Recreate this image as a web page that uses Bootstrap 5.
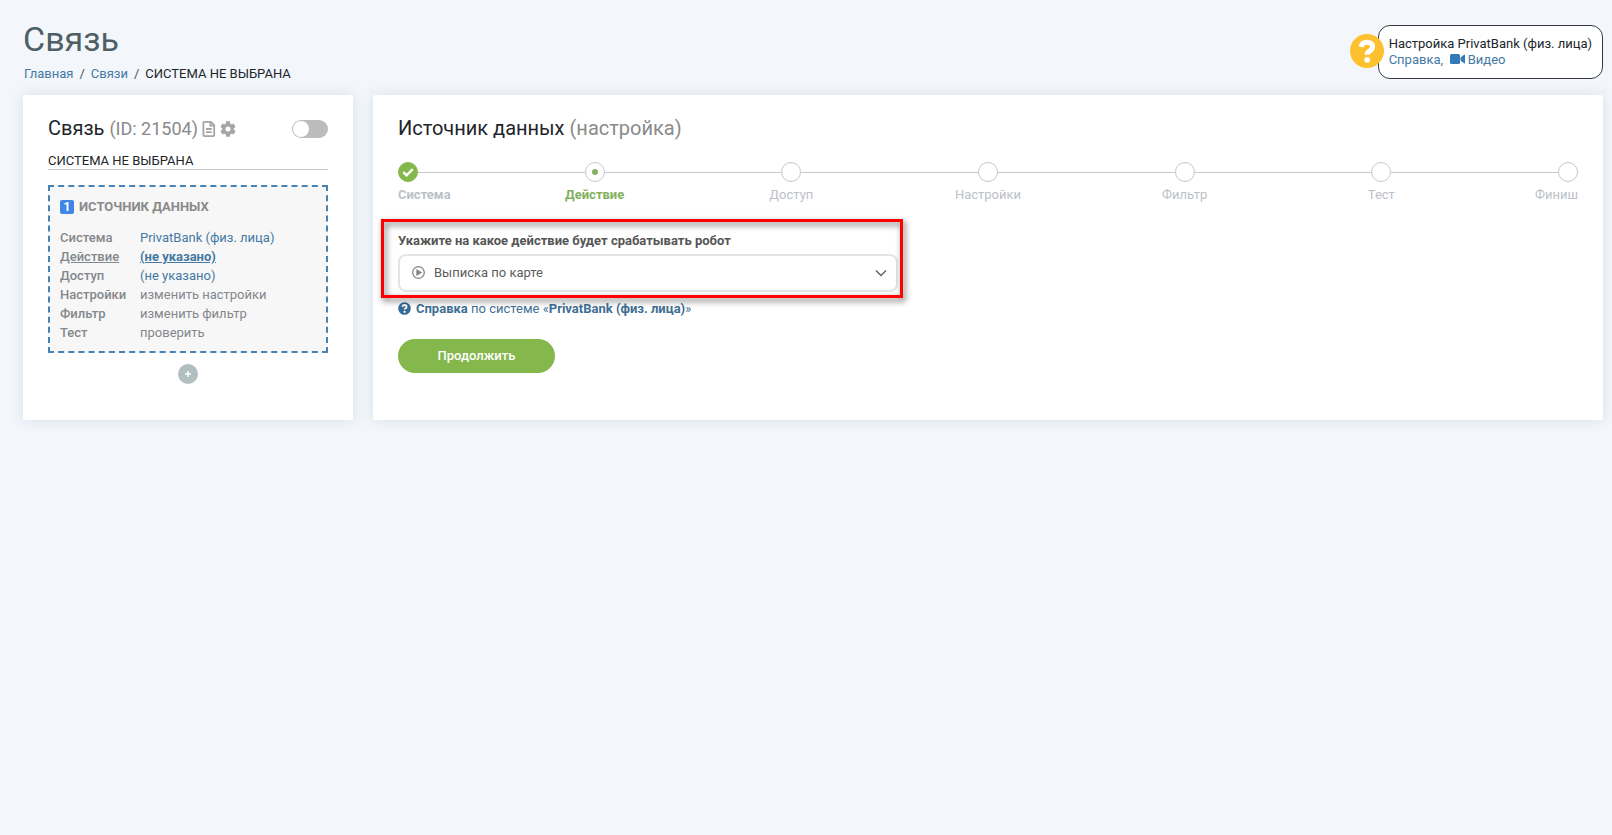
<!DOCTYPE html>
<html lang="ru">
<head>
<meta charset="utf-8">
<meta name="viewport" content="width=device-width, initial-scale=1">
<title>Связь</title>
<link rel="stylesheet" href="https://cdn.jsdelivr.net/npm/bootstrap@5.3.0/dist/css/bootstrap.min.css">
<style>
  body { background: #f3f7fc; font-family: Roboto, "Noto Sans", sans-serif; font-size: 13px; line-height: 19px; color: #212529; }
  a { color: #4479a3; text-decoration: none; }
  a:hover { text-decoration: underline; }
  .page { padding: 19px 9px 20px 23px; }
  .page-title { font-size: 34px; line-height: 40px; font-weight: 400; color: #4f5f66; margin: 0 0 5px; }
  .breadcrumb { --bs-breadcrumb-item-padding-x: 6px; --bs-breadcrumb-divider-color: #495057; --bs-breadcrumb-item-active-color: #212529; margin: 0 0 12px; padding-left: 1px; }

  .help-box { position: relative; margin-top: 6px; padding: 10px; border: 1px solid #343a40; border-radius: 12px; background: #fff; line-height: 16px; }
  .help-mark { position: absolute; left: -29px; top: 8px; width: 34px; height: 34px; }
  .help-links { color: #4479a3; }

  .columns { gap: 20px; }
  .panel { background: #fff; border-radius: 2px; box-shadow: 0 0 14px rgba(60, 75, 95, .14); padding: 20px 25px 36px; }
  .panel-side { flex: 0 0 330px; }
  .panel-title { font-size: 20px; line-height: 26px; font-weight: 400; margin: 0; }
  .panel-side .panel-title { line-height: 27px; }
  .dim { color: #8a8a8a; }
  .link-id { font-size: 18px; }
  .tool { color: #a5a5a5; line-height: 0; }
  .switch { appearance: none; width: 36px; height: 18px; margin: 0; border-radius: 9px; background: #bcbcbc; position: relative; cursor: pointer; }
  .switch::before { content: ""; position: absolute; left: 1px; top: 1px; width: 16px; height: 16px; border-radius: 50%; background: #fff; }
  .switch:checked { background: #84b84c; }
  .switch:checked::before { left: 19px; }
  .link-name { line-height: 17px; margin: 10px 0 15px; border-bottom: 1px solid #c8c8c8; }

  .source { border: 2px dashed #4682b4; background: #f7f7f7; padding: 10px 10px 9px; }
  .source-title { gap: 5px; font-size: 13px; line-height: 19px; font-weight: 700; color: #8a8a8a; margin: 0 0 12px; }
  .num { width: 14px; height: 14px; border-radius: 2px; background: #4285e8; color: #fff; font-size: 12px; line-height: 14px; text-align: center; }
  .source th { width: 80px; padding: 0; font-weight: 500; color: #84878c; }
  .source td { padding: 0; }
  .source td a { color: #4479a3; }
  .source td a.idle { color: #84878c; }
  .add { width: 20px; height: 20px; margin-top: 11px; padding: 0; border: 0; border-radius: 50%; background: #b2bfc1; }

  .steps { display: grid; grid-template-columns: 1fr repeat(5, 2fr) 1fr; margin: 21px 0 27px; padding: 0; list-style: none; color: #bcc1c7; }
  .steps li { display: flex; flex-direction: column; align-items: center; min-width: 0; }
  .steps li:first-child { align-items: flex-start; }
  .steps li:last-child { align-items: flex-end; }
  .rail { display: flex; align-items: center; width: 100%; margin-bottom: 3px; }
  .rail::before, .rail::after { content: ""; flex: 1; height: 1px; background: #c6c8ca; }
  .steps li:first-child .rail::before, .steps li:last-child .rail::after { display: none; }
  .dot { width: 20px; height: 20px; border: 1px solid #c6c8ca; border-radius: 50%; display: flex; align-items: center; justify-content: center; }
  .done .dot { background: #84b84c; border-color: #84b84c; }
  .done { font-weight: 700; }
  .current { font-weight: 700; color: #84b062; }
  .current .dot::before { content: ""; width: 6px; height: 6px; border-radius: 50%; background: #84b062; }

  .action-field { position: relative; max-width: 500px; }
  .action-field::after { content: ""; position: absolute; inset: -12px -5px -6px -17px; border: 3px solid #f00; filter: drop-shadow(2px 3px 3px rgba(0, 0, 0, .6)); pointer-events: none; }
  .action-field label { display: block; font-weight: 700; color: #555; margin-bottom: 4px; }
  .action-field .form-select { height: 38px; padding: 0 34px; border: 2px solid #e4e4e4; border-radius: 8px; font-size: 13px; color: #5c5c5c;
    background-image: url("data:image/svg+xml,%3Csvg xmlns='http://www.w3.org/2000/svg' viewBox='0 0 12 12'%3E%3Cpath d='M1 3.500l5 5 5-5' fill='none' stroke='%23666' stroke-width='1.500'/%3E%3C/svg%3E");
    background-position: right 9px center; background-size: 12px 12px; }
  .play { position: absolute; left: 14px; top: 12px; }
  .help-line { margin: 7px 0 19px; }
  .help-line a { gap: 5px; color: #3f6f93; }
  .btn-go { width: 157px; height: 34px; padding: 0; border: 0; border-radius: 17px; background: #84b84c; color: #fff; font-size: 13px; font-weight: 500; }
  .btn-go:hover { background: #74a83e; color: #fff; }
</style>
</head>
<body>
<div class="page">
  <header class="d-flex justify-content-between align-items-start">
    <div>
      <h1 class="page-title">Связь</h1>
      <nav aria-label="Навигация">
        <ol class="breadcrumb">
          <li class="breadcrumb-item"><a href="#">Главная</a></li>
          <li class="breadcrumb-item"><a href="#">Связи</a></li>
          <li class="breadcrumb-item active">СИСТЕМА НЕ ВЫБРАНА</li>
        </ol>
      </nav>
    </div>
    <aside class="help-box">
      <svg class="help-mark" viewBox="0 0 34 34" aria-hidden="true"><circle cx="17" cy="17" r="17" fill="#fdc02f"/><path d="M11 12.800C11.800 9.600 14 8.300 17 8.300c3.400 0 5.600 1.800 5.600 4.500 0 4.200-5.500 3.900-5.500 8" fill="none" stroke="#fff" stroke-width="5"/><circle cx="17.200" cy="25.800" r="2.900" fill="#fff"/></svg>
      <div>Настройка PrivatBank (физ. лица)</div>
      <div class="help-links"><a href="#">Справка</a>, &nbsp;<a href="#"><svg class="align-baseline" width="15" height="10" viewBox="0 0 15 10" fill="#337ab7" aria-hidden="true"><rect width="10" height="10" rx="1.500"/><path d="M10.500 3.500 14 .8q1-.5 1 .4v7.600q0 .9-1 .4l-3.500-2.700z"/></svg> Видео</a></div>
    </aside>
  </header>

  <main class="columns d-flex flex-column flex-lg-row">
    <section class="panel panel-side">
      <div class="d-flex align-items-center">
        <h2 class="panel-title me-1">Связь <span class="dim link-id">(ID: 21504)</span></h2>
        <a class="tool me-1" href="#" aria-label="Журнал"><svg width="14" height="16" viewBox="0 0 14 16" fill="none" stroke="currentColor" stroke-width="1.800" aria-hidden="true"><path d="M2.300.9H9l3.200 3.200v10.100q0 .9-.9.900H2.300q-.9 0-.9-.9V1.800q0-.9.900-.9zM8.300.9v3.800h3.900M4 8h5.800M4 11.200h5.800"/></svg></a>
        <a class="tool" href="#" aria-label="Параметры"><svg width="16" height="16" viewBox="0 0 16 16" aria-hidden="true"><path fill="none" stroke="currentColor" stroke-width="4" d="M8 .3v3M8 12.700v3M1.400 4.200l2.600 1.500M12 10.300l2.600 1.500M1.400 11.800 4 10.300M12 5.700l2.600-1.500"/><circle cx="8" cy="8" r="4.200" fill="none" stroke="currentColor" stroke-width="3.400"/></svg></a>
        <input class="switch ms-auto" type="checkbox" role="switch" aria-label="Включить связь">
      </div>
      <div class="link-name">СИСТЕМА НЕ ВЫБРАНА</div>
      <div class="source">
        <h3 class="source-title d-flex align-items-center"><span class="num">1</span>ИСТОЧНИК ДАННЫХ</h3>
        <table class="w-100">
          <tbody>
            <tr><th scope="row">Система</th><td><a href="#">PrivatBank (физ. лица)</a></td></tr>
            <tr><th scope="row" class="text-decoration-underline">Действие</th><td><a href="#" class="fw-bold text-decoration-underline">(не указано)</a></td></tr>
            <tr><th scope="row">Доступ</th><td><a href="#">(не указано)</a></td></tr>
            <tr><th scope="row">Настройки</th><td><a class="idle" href="#">изменить настройки</a></td></tr>
            <tr><th scope="row">Фильтр</th><td><a class="idle" href="#">изменить фильтр</a></td></tr>
            <tr><th scope="row">Тест</th><td><a class="idle" href="#">проверить</a></td></tr>
          </tbody>
        </table>
      </div>
      <button class="add d-flex align-items-center justify-content-center mx-auto" type="button" aria-label="Добавить"><svg width="8" height="8" viewBox="0 0 8 8" stroke="#fff" stroke-width="1.500" aria-hidden="true"><path d="M4 1v6M1 4h6"/></svg></button>
    </section>

    <section class="panel flex-grow-1">
      <h2 class="panel-title">Источник данных <span class="dim">(настройка)</span></h2>
      <ol class="steps">
        <li class="done"><div class="rail"><span class="dot"><svg width="12" height="12" viewBox="0 0 12 12" fill="none" stroke="#fff" stroke-width="2.400" aria-hidden="true"><path d="M1.300 6.200 4.600 9.300 10.700 3.200"/></svg></span></div>Система</li>
        <li class="current"><div class="rail"><span class="dot"></span></div>Действие</li>
        <li><div class="rail"><span class="dot"></span></div>Доступ</li>
        <li><div class="rail"><span class="dot"></span></div>Настройки</li>
        <li><div class="rail"><span class="dot"></span></div>Фильтр</li>
        <li><div class="rail"><span class="dot"></span></div>Тест</li>
        <li><div class="rail"><span class="dot"></span></div>Финиш</li>
      </ol>
      <div class="action-field">
        <label for="action">Укажите на какое действие будет срабатывать робот</label>
        <div class="position-relative">
          <select class="form-select" id="action"><option>Выписка по карте</option></select>
          <svg class="play" width="13" height="13" viewBox="0 0 13 13" aria-hidden="true"><circle cx="6.500" cy="6.500" r="5.800" fill="none" stroke="#858585" stroke-width="1.300"/><path d="M4.300 3 10.200 6.500 4.300 10z" fill="#858585"/></svg>
        </div>
      </div>
      <p class="help-line"><a class="d-inline-flex align-items-center" href="#"><svg width="13" height="13" viewBox="0 0 13 13" aria-hidden="true"><circle cx="6.500" cy="6.500" r="6.300" fill="#346a96"/><path d="M4.300 4.800C4.600 3.500 5.500 3 6.500 3c1.200 0 2.100.7 2.100 1.700 0 1.600-2 1.500-2 2.900" fill="none" stroke="#fff" stroke-width="1.800"/><circle cx="6.600" cy="9.800" r="1.100" fill="#fff"/></svg><span><b>Справка</b> по системе «<b>PrivatBank (физ. лица)</b>»</span></a></p>
      <button class="btn btn-go" type="button">Продолжить</button>
    </section>
  </main>
</div>
<script src="https://cdn.jsdelivr.net/npm/bootstrap@5.3.0/dist/js/bootstrap.bundle.min.js"></script>
</body>
</html>
